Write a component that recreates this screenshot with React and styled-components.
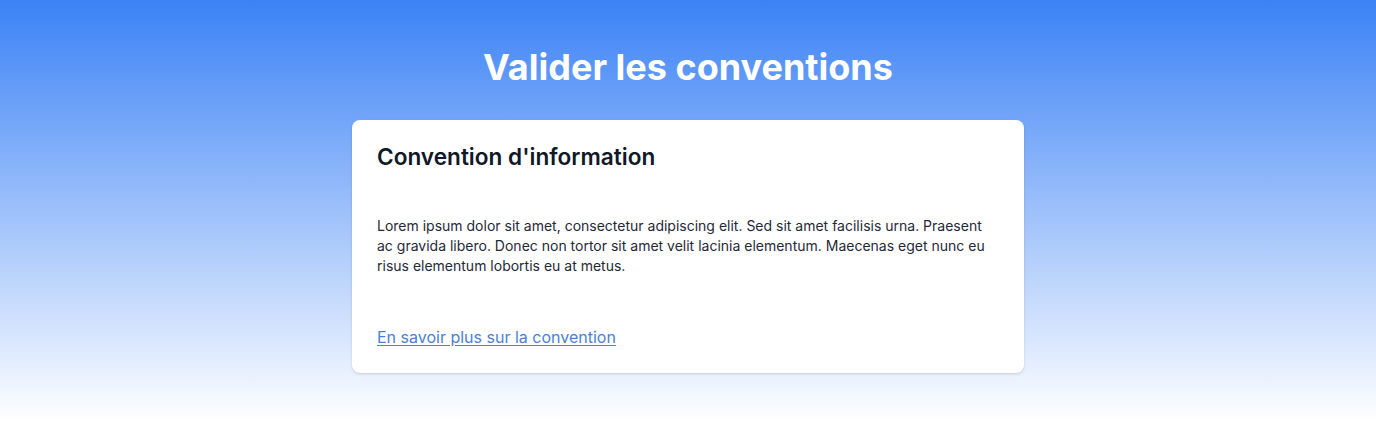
import React from "react";
import styled, { createGlobalStyle } from "styled-components";

const GlobalStyle = createGlobalStyle`
  * {
    box-sizing: border-box;
  }
  html, body {
    margin: 0;
    padding: 0;
  }
  body {
    font-family: Inter, "Noto Sans", "Liberation Sans", sans-serif;
    -webkit-font-smoothing: antialiased;
  }
`;

const Page = styled.div`
  min-height: 422px;
  background: linear-gradient(to bottom, #3b82f6 0%, #ffffff 100%);
  display: flex;
  flex-direction: column;
  align-items: center;
  padding: 47px 16px 48px;
`;

const Title = styled.h1`
  margin: 0 0 33px;
  font-size: 36px;
  line-height: 40px;
  font-weight: 700;
  color: #ffffff;
  text-align: center;
`;

const Card = styled.section`
  width: 672px;
  background: #ffffff;
  border-radius: 8px;
  box-shadow: 0 1px 3px rgba(0, 0, 0, 0.1), 0 1px 2px rgba(0, 0, 0, 0.06);
  padding: 21px 24px 24px 25px;
  display: flex;
  flex-direction: column;
`;

const CardTitle = styled.h2`
  margin: 0 0 43px;
  font-size: 22.6px;
  line-height: 32px;
  font-weight: 600;
  color: #111827;
`;

const Body = styled.p`
  margin: 0 0 49px;
  font-size: 14px;
  line-height: 20px;
  color: #1f2937;
`;

const MoreLink = styled.a`
  align-self: flex-start;
  font-size: 16px;
  line-height: 24px;
  color: #4a80d8;
  text-decoration: underline;
  text-underline-offset: 2px;
`;

export default function App() {
  return (
    <>
      <GlobalStyle />
      <Page>
        <Title>Valider les conventions</Title>
        <Card>
          <CardTitle>Convention d'information</CardTitle>
          <Body>
            Lorem ipsum dolor sit amet, consectetur adipiscing elit. Sed sit amet facilisis urna. Praesent
            ac gravida libero. Donec non tortor sit amet velit lacinia elementum. Maecenas eget nunc eu
            risus elementum lobortis eu at metus.
          </Body>
          <MoreLink href="#">En savoir plus sur la convention</MoreLink>
        </Card>
      </Page>
    </>
  );
}
